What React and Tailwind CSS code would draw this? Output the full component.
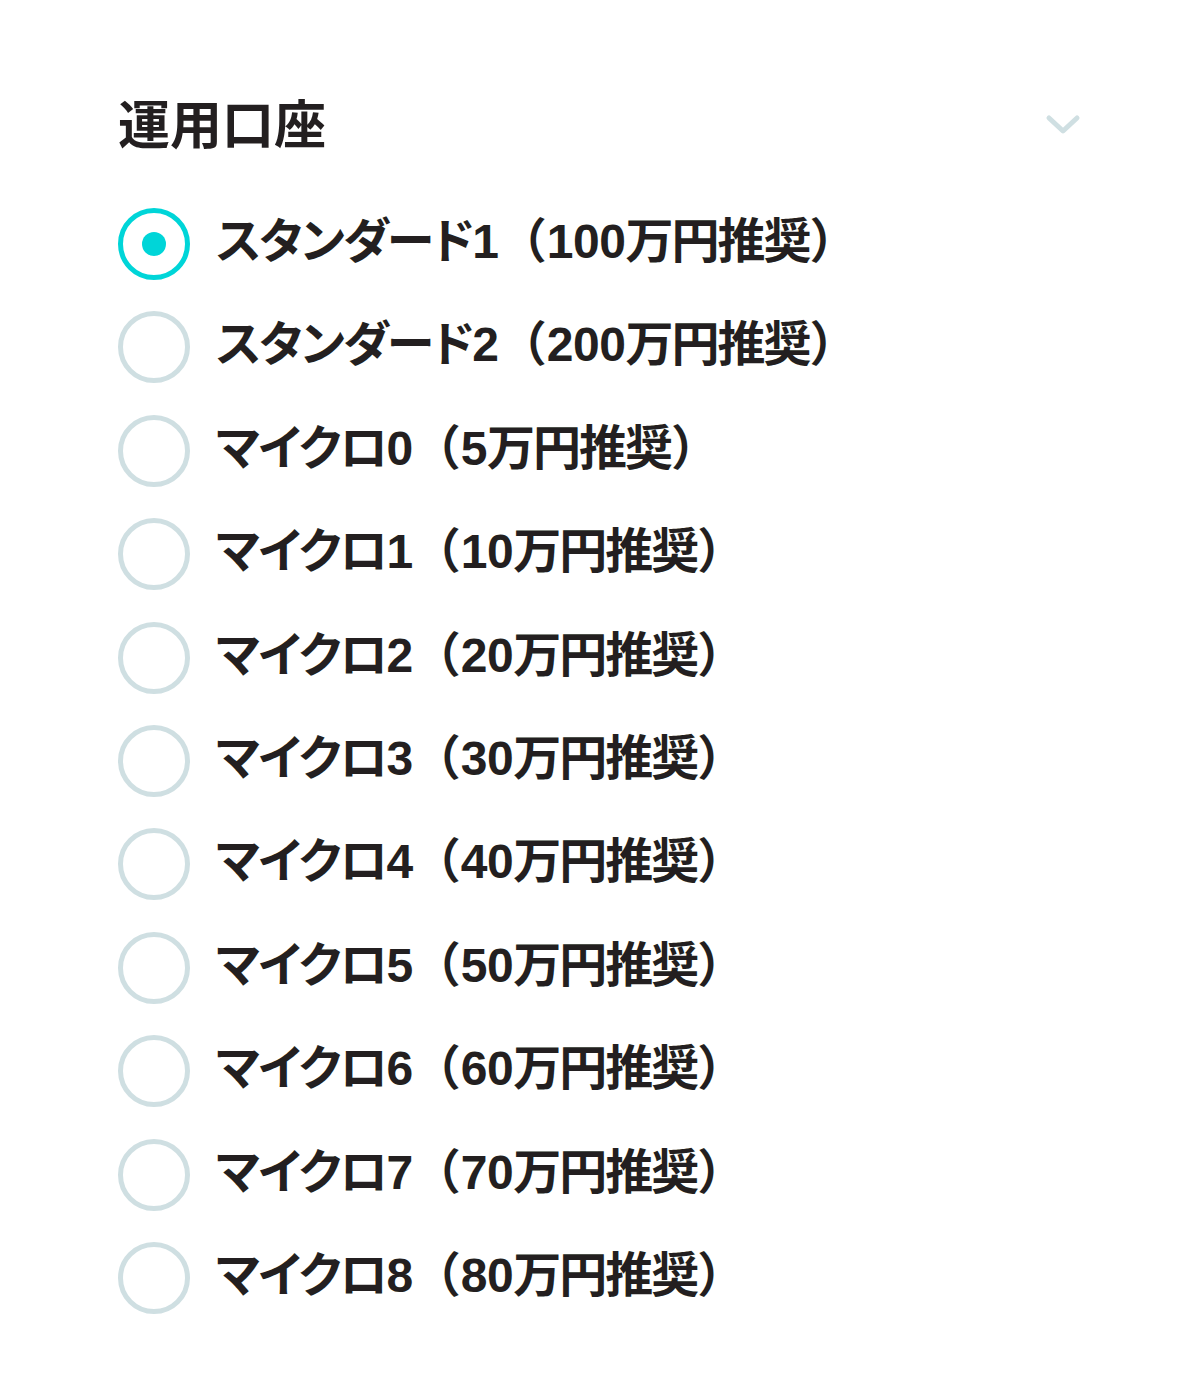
import React from "react";

const items = [
  ["スタンダード1", "100万円推奨"],
  ["スタンダード2", "200万円推奨"],
  ["マイクロ0", "5万円推奨"],
  ["マイクロ1", "10万円推奨"],
  ["マイクロ2", "20万円推奨"],
  ["マイクロ3", "30万円推奨"],
  ["マイクロ4", "40万円推奨"],
  ["マイクロ5", "50万円推奨"],
  ["マイクロ6", "60万円推奨"],
  ["マイクロ7", "70万円推奨"],
  ["マイクロ8", "80万円推奨"],
];

function Seg({ text }) {
  return text
    .split(/(\d+)/)
    .filter(Boolean)
    .map((p, k) =>
      /^\d+$/.test(p) ? (
        <span key={k} className="tracking-[-0.4px]">{p}</span>
      ) : (
        <span key={k} className="tracking-[-2px]">{p}</span>
      )
    );
}

export default function App() {
  return (
    <div
      className="w-[1200px] h-[1395px] bg-white pl-[118px] pr-[118px] pt-[83px]"
      style={{ fontFamily: '"Noto Sans CJK JP", "Noto Sans", sans-serif' }}
    >
      <div className="flex items-center justify-between h-[78px]">
        <h2 className="text-[52px] font-bold leading-none text-[#231f20]">運用口座</h2>
        <svg width="36" height="24" viewBox="0 0 36 24" className="mr-[1px] mt-[6px]">
          <polyline
            points="4,5 18,18 32,5"
            fill="none"
            stroke="#cfdfe2"
            strokeWidth="5"
            strokeLinecap="round"
            strokeLinejoin="round"
          />
        </svg>
      </div>
      <div className="mt-[47px] flex flex-col gap-[31.4px]">
        {items.map(([name, inner], i) => (
          <label key={i} className="flex items-center gap-[26px] h-[72px]">
            <span
              className={
                "flex items-center justify-center w-[72px] h-[72px] rounded-full border-[5px] " +
                (i === 0 ? "border-[#00d5d8]" : "border-[#cfdfe2]")
              }
            >
              {i === 0 && <span className="w-[24px] h-[24px] rounded-full bg-[#00d5d8]" />}
            </span>
            <span
              className="text-[48px] font-bold leading-none text-[#231f20] mb-[4px] whitespace-nowrap [font-feature-settings:'palt']"
              style={{ fontFamily: '"Liberation Sans", "Noto Sans CJK JP", sans-serif' }}
            >
              <Seg text={name} />
              <span className="[font-feature-settings:normal]">（</span>
              <Seg text={inner} />
              <span className="[font-feature-settings:normal]">）</span>
            </span>
          </label>
        ))}
      </div>
    </div>
  );
}
